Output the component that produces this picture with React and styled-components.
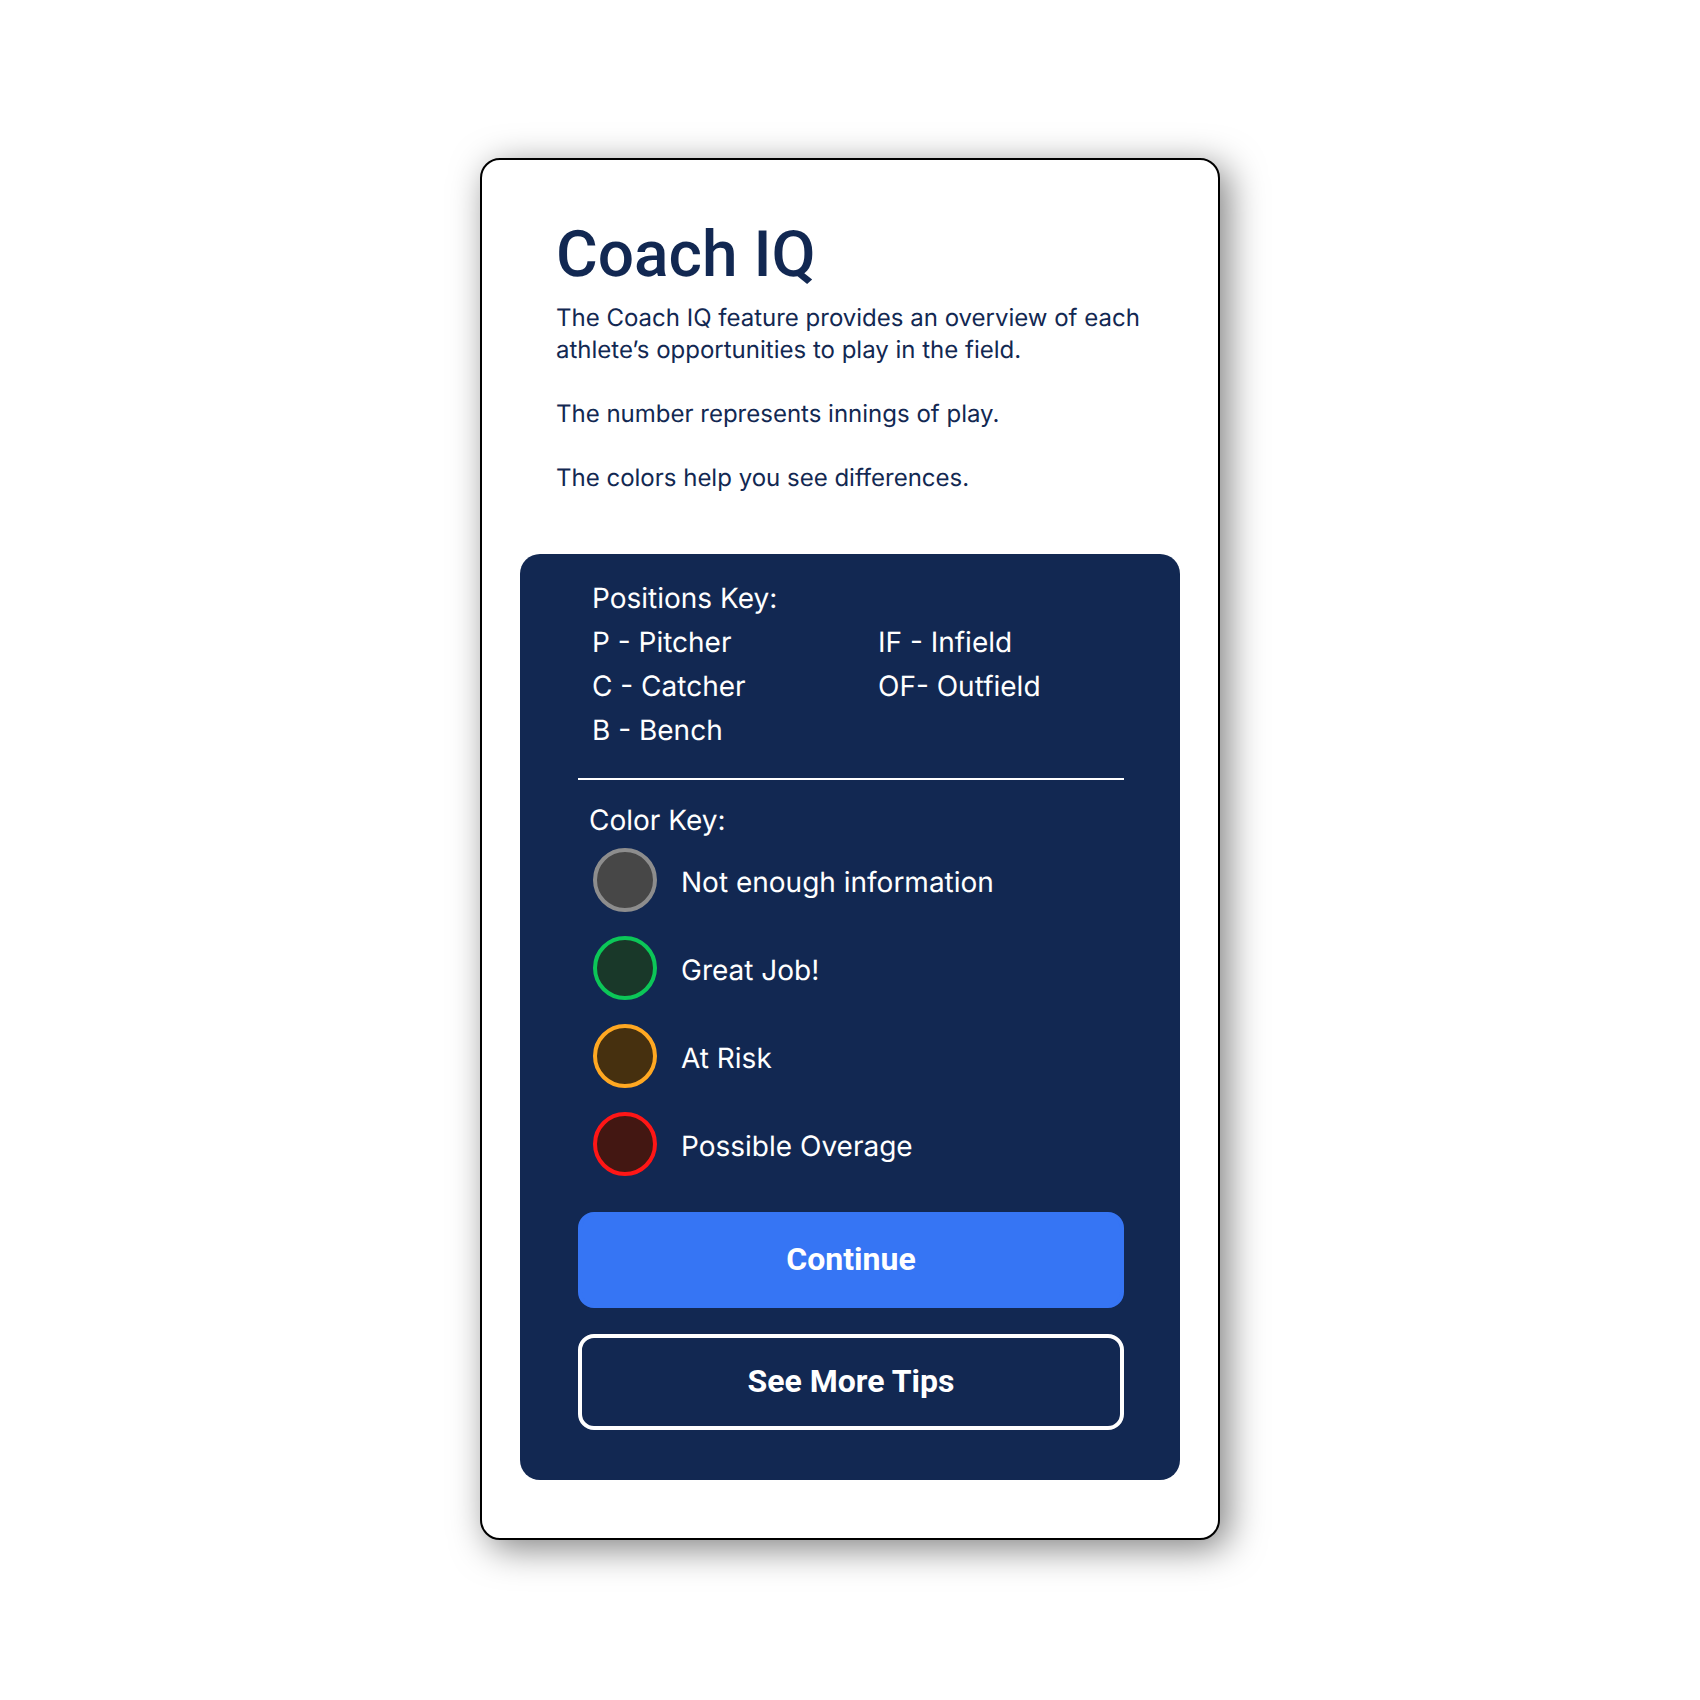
import React from "react";
import styled, { createGlobalStyle } from "styled-components";

const positions = [
  "P - Pitcher",
  "IF - Infield",
  "C - Catcher",
  "OF- Outfield",
  "B - Bench"
];

const colors = [
  { label: "Not enough information", ring: "#8d8d8d", fill: "#474747" },
  { label: "Great Job!", ring: "#0cc658", fill: "#193829" },
  { label: "At Risk", ring: "#ffa822", fill: "#46300f" },
  { label: "Possible Overage", ring: "#ff1616", fill: "#431712" }
];

const App = () => {
  return (
    <Page>
      <GlobalStyle />
      <Card>
        <Intro>
          <Title>Coach IQ</Title>
          <Text>
            The Coach IQ feature provides an overview of each athlete’s
            opportunities to play in the field.
          </Text>
          <Text>The number represents innings of play.</Text>
          <Text>The colors help you see differences.</Text>
        </Intro>
        <Panel>
          <Section $inset={14}>
            <KeyTitle>Positions Key:</KeyTitle>
            <Positions>
              {positions.map(position => (
                <li key={position}>{position}</li>
              ))}
            </Positions>
          </Section>
          <Divider />
          <Section $inset={11}>
            <KeyTitle>Color Key:</KeyTitle>
            <Colors>
              {colors.map(({ label, ring, fill }) => (
                <ColorRow key={label}>
                  <Circle $ring={ring} $fill={fill} />
                  <ColorLabel>{label}</ColorLabel>
                </ColorRow>
              ))}
            </Colors>
          </Section>
          <Actions>
            <Button type="button" $primary>
              Continue
            </Button>
            <Button type="button">See More Tips</Button>
          </Actions>
        </Panel>
      </Card>
    </Page>
  );
};

export default App;

const GlobalStyle = createGlobalStyle`
  * {
    box-sizing: border-box;
    margin: 0;
    padding: 0;
  }

  body {
    background-color: #fff;
    font-family: Inter, "Liberation Sans", sans-serif;
    text-rendering: geometricPrecision;
  }

  ul {
    list-style: none;
  }
`;

const Page = styled.main`
  display: flex;
  justify-content: center;
  padding: 158px 16px;
`;

const Card = styled.article`
  width: 100%;
  max-width: 740px;
  padding: 55px 38px 58px;
  border: 2px solid #000;
  border-radius: 20px;
  background-color: #fff;
  box-shadow: 8px 8px 36px rgba(0, 0, 0, 0.5);
`;

const Intro = styled.header`
  padding: 0 36px;
  color: #122852;
`;

const Title = styled.h1`
  margin-bottom: 7px;
  font-family: Roboto, "Liberation Sans", sans-serif;
  font-size: 64px;
  font-weight: 500;
  line-height: 80px;
`;

const Text = styled.p`
  font-size: 24px;
  line-height: 32px;

  & + & {
    margin-top: 32px;
  }
`;

const Panel = styled.section`
  margin-top: 60px;
  padding: 22px 56px 50px 58px;
  border-radius: 20px;
  background-color: #122852;
  color: #fff;
  font-size: 28px;
  line-height: 44px;
`;

const Section = styled.div`
  padding: 0 ${props => props.$inset}px;
`;

const KeyTitle = styled.h2`
  font-size: 28px;
  font-weight: 400;
`;

const Positions = styled.ul`
  display: grid;
  grid-template-columns: 286px 1fr;
`;

const Divider = styled.hr`
  margin: 26px 0 18px;
  border: none;
  border-top: 2px solid #fff;
`;

const Colors = styled.ul`
  display: flex;
  flex-direction: column;
  gap: 24px;
  margin-top: 6px;
  padding-left: 4px;
`;

const ColorRow = styled.li`
  display: flex;
  align-items: center;
  gap: 24px;
`;

const Circle = styled.span`
  flex: none;
  width: 64px;
  height: 64px;
  border: 4px solid ${props => props.$ring};
  border-radius: 50%;
  background-color: ${props => props.$fill};
`;

const ColorLabel = styled.span`
  padding-top: 4px;
`;

const Actions = styled.div`
  display: flex;
  flex-direction: column;
  gap: 26px;
  margin-top: 36px;
`;

const Button = styled.button`
  height: 96px;
  padding-bottom: 2px;
  border: 4px solid ${props => (props.$primary ? "#3675f4" : "#fff")};
  border-radius: 16px;
  background-color: ${props => (props.$primary ? "#3675f4" : "transparent")};
  color: #fff;
  font-family: Roboto, "Liberation Sans", sans-serif;
  font-size: 32px;
  font-weight: 700;

  &:hover {
    cursor: pointer;
  }
`;
